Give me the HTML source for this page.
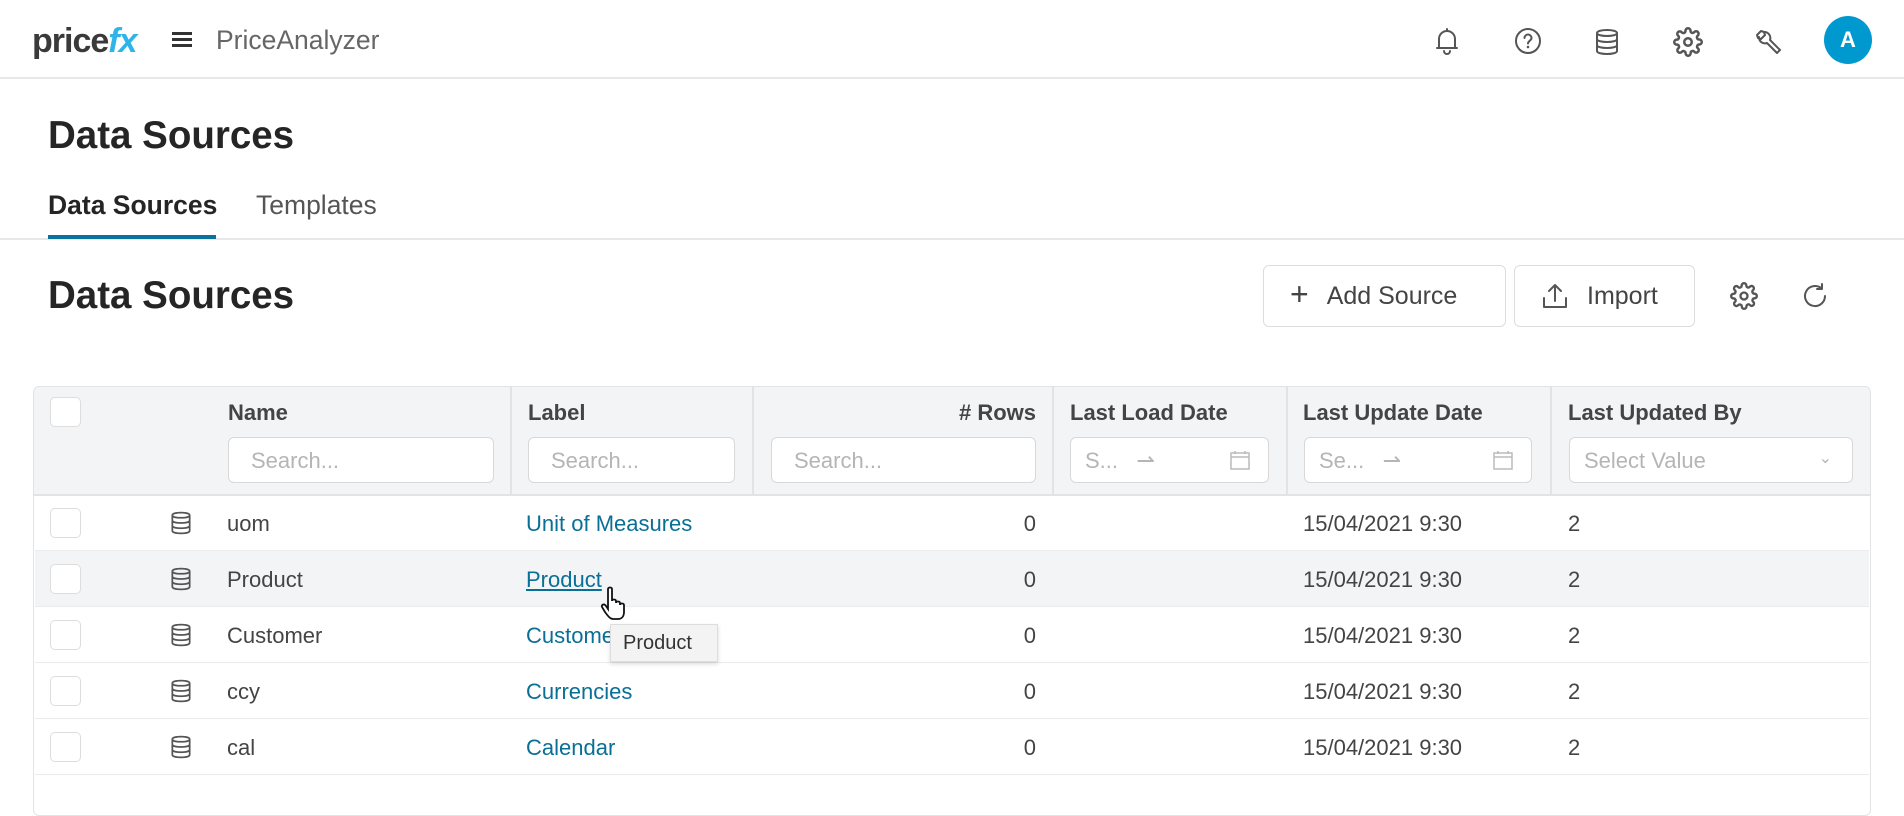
<!DOCTYPE html>
<html><head><meta charset="utf-8"><style>
*{box-sizing:border-box;margin:0;padding:0}
body{width:1904px;height:800px;overflow:hidden;background:#fff;font-family:"Liberation Sans",sans-serif;color:#2b2b2b;position:relative}
.abs{position:absolute}
.hdr{left:0;top:0;width:1904px;height:79px;border-bottom:2px solid #e8e8ec}
.ico{stroke:#555;fill:none;stroke-width:2;stroke-linecap:round;stroke-linejoin:round}
.th{font-weight:bold;font-size:22px;color:#444;top:400px}
.inp{top:437px;height:46px;border:1.5px solid #d9d9d9;border-radius:6px;background:#fff;color:#b5b5b5;font-size:22px;padding:10px 0 0 22px}
.row{left:35px;width:1834px;height:56px;border-bottom:1.5px solid #ececee}
.cb{left:15px;top:13px;width:31px;height:30px;border:1.5px solid #ddd;border-radius:5px;background:#fff}
.t{font-size:22px;top:16px;color:#444}
.lnk{color:#0a6f96}
.btn{top:265px;height:62px;border:1.5px solid #ddd;border-radius:6px;font-size:25px;color:#444;display:flex;align-items:center}
</style></head><body>
<div class="abs hdr"></div>
<div class="abs" style="left:32px;top:22px;font-size:34px;font-weight:bold;color:#3a3a3a;letter-spacing:-1px">price<span style="color:#2fb4e9;font-style:italic">fx</span></div>
<div class="abs" style="left:172px;top:32px;width:20px;height:2.5px;background:#333;box-shadow:0 6px 0 #333,0 12px 0 #333"></div>
<div class="abs" style="left:216px;top:25px;font-size:26.5px;color:#666">PriceAnalyzer</div>
<svg class="abs" style="left:1433px;top:26px" width="28" height="30" viewBox="0 0 28 30"><path class="ico" d="M6 22V13a8 8 0 0116 0v9H6zM4 22h20M14 3v2M11 25a3 3 0 006 0"/></svg>
<svg class="abs" style="left:1514px;top:27px" width="28" height="28" viewBox="0 0 28 28"><circle class="ico" cx="14" cy="14" r="12"/><path class="ico" d="M10.5 11a3.5 3.5 0 117 0c0 2.5-3.5 3-3.5 5.5"/><circle cx="14" cy="20" r="1.3" fill="#555"/></svg>
<svg class="abs" style="left:1594px;top:27px" width="26" height="30" viewBox="0 0 26 30"><path class="ico" d="M3 6c0-4 20-4 20 0v18c0 4-20 4-20 0zM3 6c0 4 20 4 20 0M3 12c0 4 20 4 20 0M3 18c0 4 20 4 20 0"/></svg>
<svg class="abs" style="left:1673px;top:27px" width="30" height="30" viewBox="0 0 24 24"><circle class="ico" cx="12" cy="12" r="3"/><path class="ico" d="M19.4 15a1.7 1.7 0 00.3 1.8l.1.1a2 2 0 11-2.8 2.8l-.1-.1a1.7 1.7 0 00-1.8-.3 1.7 1.7 0 00-1 1.5V21a2 2 0 11-4 0v-.1a1.7 1.7 0 00-1.1-1.5 1.7 1.7 0 00-1.8.3l-.1.1a2 2 0 11-2.8-2.8l.1-.1a1.7 1.7 0 00.3-1.8 1.7 1.7 0 00-1.5-1H3a2 2 0 110-4h.1a1.7 1.7 0 001.5-1.1 1.7 1.7 0 00-.3-1.8l-.1-.1a2 2 0 112.8-2.8l.1.1a1.7 1.7 0 001.8.3H9a1.7 1.7 0 001-1.5V3a2 2 0 114 0v.1a1.7 1.7 0 001 1.5 1.7 1.7 0 001.8-.3l.1-.1a2 2 0 112.8 2.8l-.1.1a1.7 1.7 0 00-.3 1.8V9a1.7 1.7 0 001.5 1H21a2 2 0 110 4h-.1a1.7 1.7 0 00-1.5 1z"/></svg>
<svg class="abs" style="left:1753px;top:27px" width="30" height="30" viewBox="0 0 30 30"><path class="ico" d="M4 8l4-4 3 1 1 3-4 4-3-1zM11 5a6 6 0 016 8l10 10-3 3-10-10a6 6 0 01-8-6"/></svg>
<div class="abs" style="left:1824px;top:16px;width:48px;height:48px;border-radius:50%;background:#0099cf;color:#fff;font-size:22px;font-weight:bold;text-align:center;line-height:48px">A</div>

<div class="abs" style="left:48px;top:114px;font-size:38.5px;font-weight:bold;color:#252525">Data Sources</div>
<div class="abs" style="left:48px;top:190px;font-size:26.5px;font-weight:bold;color:#252525">Data Sources</div>
<div class="abs" style="left:256px;top:190px;font-size:26.5px;color:#555">Templates</div>
<div class="abs" style="left:0;top:238px;width:1904px;height:2px;background:#e8e8ec"></div>
<div class="abs" style="left:48px;top:235px;width:168px;height:4px;background:#0a739d"></div>

<div class="abs" style="left:48px;top:274px;font-size:38.5px;font-weight:bold;color:#252525">Data Sources</div>
<div class="abs btn" style="left:1263px;width:243px;padding-left:26px"><span style="font-size:32px;font-weight:300;margin-right:18px;margin-top:-3px">+</span>Add Source</div>
<div class="abs btn" style="left:1514px;width:181px;padding-left:72px">Import</div>
<svg class="abs" style="left:1541px;top:282px" width="28" height="28" viewBox="0 0 28 28"><path class="ico" d="M3 16v9h22v-9M14 19V3M8 9l6-6 6 6"/></svg>
<svg class="abs" style="left:1730px;top:282px" width="28" height="28" viewBox="0 0 24 24"><circle class="ico" cx="12" cy="12" r="3"/><path class="ico" d="M19.4 15a1.7 1.7 0 00.3 1.8l.1.1a2 2 0 11-2.8 2.8l-.1-.1a1.7 1.7 0 00-1.8-.3 1.7 1.7 0 00-1 1.5V21a2 2 0 11-4 0v-.1a1.7 1.7 0 00-1.1-1.5 1.7 1.7 0 00-1.8.3l-.1.1a2 2 0 11-2.8-2.8l.1-.1a1.7 1.7 0 00.3-1.8 1.7 1.7 0 00-1.5-1H3a2 2 0 110-4h.1a1.7 1.7 0 001.5-1.1 1.7 1.7 0 00-.3-1.8l-.1-.1a2 2 0 112.8-2.8l.1.1a1.7 1.7 0 001.8.3H9a1.7 1.7 0 001-1.5V3a2 2 0 114 0v.1a1.7 1.7 0 001 1.5 1.7 1.7 0 001.8-.3l.1-.1a2 2 0 112.8 2.8l-.1.1a1.7 1.7 0 00-.3 1.8V9a1.7 1.7 0 001.5 1H21a2 2 0 110 4h-.1a1.7 1.7 0 00-1.5 1z"/></svg>
<svg class="abs" style="left:1801px;top:282px" width="28" height="28" viewBox="0 0 28 28"><path class="ico" d="M24 14a10 10 0 11-3-7.1M21 2v5h-5"/></svg>

<!-- table -->
<div class="abs" style="left:33px;top:386px;width:1838px;height:430px;border:1.5px solid #e3e3e6;border-radius:6px;overflow:hidden">
 <div class="abs" style="left:0;top:0;width:1838px;height:109px;background:#f3f4f6;border-bottom:2px solid #e3e3e6"></div>
</div>
<div class="abs" style="left:510px;top:387px;width:1.5px;height:107px;background:#e3e3e6"></div>
<div class="abs" style="left:752px;top:387px;width:1.5px;height:107px;background:#e3e3e6"></div>
<div class="abs" style="left:1052px;top:387px;width:1.5px;height:107px;background:#e3e3e6"></div>
<div class="abs" style="left:1286px;top:387px;width:1.5px;height:107px;background:#e3e3e6"></div>
<div class="abs" style="left:1550px;top:387px;width:1.5px;height:107px;background:#e3e3e6"></div>
<div class="abs" style="left:50px;top:397px;width:31px;height:30px;border:1.5px solid #ddd;border-radius:5px;background:#fff"></div>
<div class="abs th" style="left:228px">Name</div>
<div class="abs th" style="left:528px">Label</div>
<div class="abs th" style="left:900px;width:136px;text-align:right"># Rows</div>
<div class="abs th" style="left:1070px">Last Load Date</div>
<div class="abs th" style="left:1303px">Last Update Date</div>
<div class="abs th" style="left:1568px">Last Updated By</div>
<div class="abs inp" style="left:228px;width:266px">Search...</div>
<div class="abs inp" style="left:528px;width:207px">Search...</div>
<div class="abs inp" style="left:771px;width:265px">Search...</div>
<div class="abs inp" style="left:1070px;width:199px;padding-left:14px">S...&nbsp;&nbsp;&nbsp;⇀</div>
<div class="abs inp" style="left:1304px;width:228px;padding-left:14px">Se...&nbsp;&nbsp;&nbsp;⇀</div>
<div class="abs inp" style="left:1569px;width:284px;padding-left:14px">Select Value<span style="position:absolute;right:20px;top:10px;font-size:16px">⌄</span></div>
<svg class="abs" style="left:1229px;top:449px" width="22" height="22" viewBox="0 0 22 22"><path d="M2 4h18v16H2zM2 8h18M6 2v3M16 2v3" fill="none" stroke="#bbb" stroke-width="1.5"/></svg>
<svg class="abs" style="left:1492px;top:449px" width="22" height="22" viewBox="0 0 22 22"><path d="M2 4h18v16H2zM2 8h18M6 2v3M16 2v3" fill="none" stroke="#bbb" stroke-width="1.5"/></svg>

<div class="abs row" style="top:495px"><div class="abs cb"></div><svg class="abs" style="left:134px;top:15px" width="24" height="26" viewBox="0 0 26 30"><path class="ico" d="M3 6c0-4 20-4 20 0v18c0 4-20 4-20 0zM3 6c0 4 20 4 20 0M3 12c0 4 20 4 20 0M3 18c0 4 20 4 20 0"/></svg><div class="abs t" style="left:192px">uom</div><div class="abs t lnk" style="left:491px">Unit of Measures</div><div class="abs t" style="left:865px;width:136px;text-align:right">0</div><div class="abs t" style="left:1268px">15/04/2021 9:30</div><div class="abs t" style="left:1533px">2</div></div>
<div class="abs row" style="top:551px;background:#f3f4f6"><div class="abs cb"></div><svg class="abs" style="left:134px;top:15px" width="24" height="26" viewBox="0 0 26 30"><path class="ico" d="M3 6c0-4 20-4 20 0v18c0 4-20 4-20 0zM3 6c0 4 20 4 20 0M3 12c0 4 20 4 20 0M3 18c0 4 20 4 20 0"/></svg><div class="abs t" style="left:192px">Product</div><div class="abs t lnk" style="left:491px;text-decoration:underline">Product</div><div class="abs t" style="left:865px;width:136px;text-align:right">0</div><div class="abs t" style="left:1268px">15/04/2021 9:30</div><div class="abs t" style="left:1533px">2</div></div>
<div class="abs row" style="top:607px"><div class="abs cb"></div><svg class="abs" style="left:134px;top:15px" width="24" height="26" viewBox="0 0 26 30"><path class="ico" d="M3 6c0-4 20-4 20 0v18c0 4-20 4-20 0zM3 6c0 4 20 4 20 0M3 12c0 4 20 4 20 0M3 18c0 4 20 4 20 0"/></svg><div class="abs t" style="left:192px">Customer</div><div class="abs t lnk" style="left:491px">Customer</div><div class="abs t" style="left:865px;width:136px;text-align:right">0</div><div class="abs t" style="left:1268px">15/04/2021 9:30</div><div class="abs t" style="left:1533px">2</div></div>
<div class="abs row" style="top:663px"><div class="abs cb"></div><svg class="abs" style="left:134px;top:15px" width="24" height="26" viewBox="0 0 26 30"><path class="ico" d="M3 6c0-4 20-4 20 0v18c0 4-20 4-20 0zM3 6c0 4 20 4 20 0M3 12c0 4 20 4 20 0M3 18c0 4 20 4 20 0"/></svg><div class="abs t" style="left:192px">ccy</div><div class="abs t lnk" style="left:491px">Currencies</div><div class="abs t" style="left:865px;width:136px;text-align:right">0</div><div class="abs t" style="left:1268px">15/04/2021 9:30</div><div class="abs t" style="left:1533px">2</div></div>
<div class="abs row" style="top:719px"><div class="abs cb"></div><svg class="abs" style="left:134px;top:15px" width="24" height="26" viewBox="0 0 26 30"><path class="ico" d="M3 6c0-4 20-4 20 0v18c0 4-20 4-20 0zM3 6c0 4 20 4 20 0M3 12c0 4 20 4 20 0M3 18c0 4 20 4 20 0"/></svg><div class="abs t" style="left:192px">cal</div><div class="abs t lnk" style="left:491px">Calendar</div><div class="abs t" style="left:865px;width:136px;text-align:right">0</div><div class="abs t" style="left:1268px">15/04/2021 9:30</div><div class="abs t" style="left:1533px">2</div></div>

<div class="abs" style="left:610px;top:624px;width:108px;height:38px;background:#f3f3f3;border:1px solid #ddd;box-shadow:0 2px 4px rgba(0,0,0,.15);font-size:20px;color:#333;padding:7px 0 0 12px">Product</div>
<svg class="abs" style="left:600px;top:586px" width="30" height="36" viewBox="0 0 30 36"><path d="M8 3c0-2 4-2 4 0v12c0-2 4-2 4 0v2c0-2 4-2 4 0v2c0-2 4-2 4 0v7c0 4-2 7-6 7h-5c-3 0-5-3-8-7l-3-5c-1-2 2-4 4-1l2 3z" fill="#fff" stroke="#111" stroke-width="1.8"/></svg>
</body></html>
